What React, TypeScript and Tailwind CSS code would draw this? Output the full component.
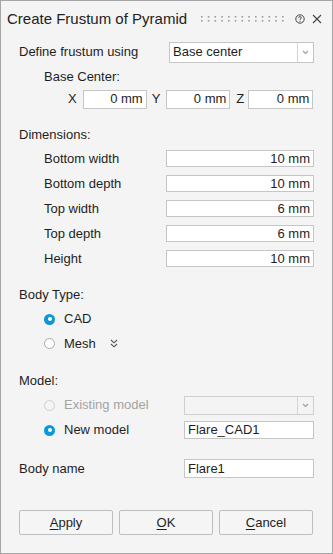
import React from "react";

const font = { fontFamily: '"Liberation Sans", Arial, sans-serif' };

function DropArrow() {
  return (
    <div className="w-[16px] h-full border-l border-[#d4d4d4] flex items-center justify-center">
      <svg width="7" height="5" viewBox="0 0 7 5">
        <polyline points="1,1 3.5,3.5 6,1" fill="none" stroke="#a0a0a0" strokeWidth="1.2" />
      </svg>
    </div>
  );
}

function Radio({ checked, disabled }: { checked?: boolean; disabled?: boolean }) {
  if (checked) {
    return (
      <div className="w-[11px] h-[11px] rounded-full bg-[#0a98d8] flex items-center justify-center">
        <div className="w-[4px] h-[4px] rounded-full bg-white" />
      </div>
    );
  }
  return (
    <div
      className={
        "w-[11px] h-[11px] rounded-full border " +
        (disabled ? "border-[#cfcfcf] bg-[#f4f4f4]" : "border-[#a9a9a9] bg-white")
      }
    />
  );
}

function DimRow({ label, value }: { label: string; value: string }) {
  return (
    <div className="h-[25px] flex items-center">
      <div className="flex-1 pl-[25px]">{label}</div>
      <div className="w-[148px] h-[17px] border border-[#c6c6c6] bg-white flex items-center justify-end pr-[3px]">
        {value}
      </div>
    </div>
  );
}

function Btn({ first, rest }: { first: string; rest: string }) {
  return (
    <div className="w-[94px] h-[25px] border border-[#bdbdbd] rounded-[2px] bg-[#f5f5f5] flex items-center justify-center">
      <span>
        <span className="underline underline-offset-[2px]">{first}</span>
        {rest}
      </span>
    </div>
  );
}

export default function App() {
  const dots: React.ReactNode[] = [];
  for (let i = 0; i < 13; i++) {
    dots.push(<rect key={"a" + i} x={i * 6.75} y={0} width={1.6} height={1.6} fill="#9c9c9c" />);
    dots.push(<rect key={"b" + i} x={i * 6.75} y={4} width={1.6} height={1.6} fill="#9c9c9c" />);
  }
  return (
    <div
      className="w-[333px] h-[554px] border border-[#a6a6a6] bg-[#f4f4f4] text-[13px] text-[#1e1e1e] flex flex-col"
      style={font}
    >
      {/* Title bar */}
      <div className="h-[36px] flex items-center pl-[6px] pr-[10px]">
        <div className="text-[15px] text-[#222]">Create Frustum of Pyramid</div>
        <svg className="ml-[14px]" width="84" height="6" viewBox="0 0 84 6">
          {dots}
        </svg>
        <div className="flex-1" />
        <svg width="10" height="10" viewBox="0 0 10 10" className="mr-[7px]">
          <circle cx="5" cy="5" r="4.2" fill="none" stroke="#444" strokeWidth="1" />
          <path d="M3.6 4 Q3.6 2.6 5 2.6 Q6.4 2.6 6.4 3.8 Q6.4 4.6 5 5.2 L5 6" fill="none" stroke="#444" strokeWidth="0.9" />
          <circle cx="5" cy="7.4" r="0.55" fill="#444" />
        </svg>
        <svg width="10" height="10" viewBox="0 0 10 10">
          <path d="M1 1 L9 9 M9 1 L1 9" stroke="#444" strokeWidth="1.1" />
        </svg>
      </div>

      <div className="px-[18px] flex flex-col">
        {/* Define row */}
        <div className="h-[24px] mt-[3px] flex items-center">
          <div className="flex-1">Define frustum using</div>
          <div className="w-[145px] h-[21px] border border-[#c6c6c6] bg-white flex items-center">
            <div className="flex-1 pl-[3px]">Base center</div>
            <DropArrow />
          </div>
        </div>
        <div className="h-[25px] flex items-center pl-[25px]">Base Center:</div>
        <div className="h-[20px] flex items-center">
          <span className="ml-[49px]">X</span>
          <div className="ml-[6px] w-[64px] h-[19px] border border-[#c6c6c6] bg-white flex items-center justify-end pr-[3px]">0 mm</div>
          <span className="ml-[5px]">Y</span>
          <div className="ml-[6px] w-[64px] h-[19px] border border-[#c6c6c6] bg-white flex items-center justify-end pr-[3px]">0 mm</div>
          <span className="ml-[6px]">Z</span>
          <div className="ml-[4px] w-[65px] h-[19px] border border-[#c6c6c6] bg-white flex items-center justify-end pr-[3px]">0 mm</div>
        </div>

        {/* Dimensions */}
        <div className="h-[23px] mt-[14px] flex items-center">Dimensions:</div>
        <DimRow label="Bottom width" value="10 mm" />
        <DimRow label="Bottom depth" value="10 mm" />
        <DimRow label="Top width" value="6 mm" />
        <DimRow label="Top depth" value="6 mm" />
        <DimRow label="Height" value="10 mm" />

        {/* Body type */}
        <div className="h-[24px] mt-[12px] flex items-center">Body Type:</div>
        <div className="h-[24px] flex items-center pl-[25px]">
          <Radio checked />
          <span className="ml-[9px]">CAD</span>
        </div>
        <div className="h-[25px] flex items-center pl-[25px]">
          <Radio />
          <span className="ml-[9px]">Mesh</span>
          <svg className="ml-[14px]" width="8" height="9" viewBox="0 0 8 9">
            <polyline points="1,1 4,3.8 7,1" fill="none" stroke="#555" strokeWidth="1.1" />
            <polyline points="1,5 4,7.8 7,5" fill="none" stroke="#555" strokeWidth="1.1" />
          </svg>
        </div>

        {/* Model */}
        <div className="h-[24px] mt-[13px] flex items-center">Model:</div>
        <div className="h-[24px] flex items-center pl-[25px]">
          <Radio disabled />
          <span className="ml-[9px] flex-1 text-[#a3a3a3]">Existing model</span>
          <div className="w-[130px] h-[19px] border border-[#cfcfcf] bg-[#f4f4f4] flex items-center">
            <div className="flex-1" />
            <DropArrow />
          </div>
        </div>
        <div className="h-[26px] flex items-center pl-[25px]">
          <Radio checked />
          <span className="ml-[9px] flex-1">New model</span>
          <div className="w-[130px] h-[18px] border border-[#c6c6c6] bg-white flex items-center pl-[3px]">Flare_CAD1</div>
        </div>

        <div className="h-[25px] mt-[13px] flex items-center">
          <span className="flex-1">Body name</span>
          <div className="w-[130px] h-[19px] border border-[#c6c6c6] bg-white flex items-center pl-[3px]">Flare1</div>
        </div>

        {/* Buttons */}
        <div className="mt-[29px] flex items-center gap-[6px]">
          <Btn first="A" rest="pply" />
          <Btn first="O" rest="K" />
          <Btn first="C" rest="ancel" />
        </div>
      </div>
    </div>
  );
}
